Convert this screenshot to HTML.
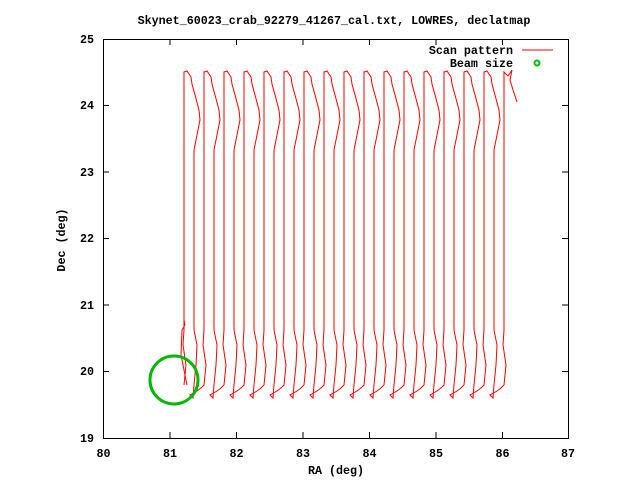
<!DOCTYPE html>
<html><head><meta charset="utf-8"><style>
html,body{margin:0;padding:0;background:#fff;}
svg{display:block}
text{font-family:"Liberation Mono",monospace;font-size:11.7px;font-weight:bold;fill:#000}
</style></head><body>
<svg width="640" height="480" viewBox="0 0 640 480" xmlns="http://www.w3.org/2000/svg">
<defs>
<path id="col" fill="none" stroke="#f00" stroke-width="1" d="M0,385 L2,365 L-1,345 L0,330 L0,72 L3,71 L7,77 L8,84 L11,95 L15,110 L16,120 L13,135 L10,150 L10,330 L13,345 L12,365 L10,385 L9,398 L6,395 L13,391 L17,388 L20,385"/>
</defs>
<text x="334" y="24" text-anchor="middle">Skynet_60023_crab_92279_41267_cal.txt, LOWRES, declatmap</text>
<g stroke="#000" stroke-width="1" fill="none">
<rect x="103.5" y="39.5" width="465" height="399"/>
<path d="M170,39v6M170,438v-6M236.5,39v6M236.5,438v-6M303,39v6M303,438v-6M369.5,39v6M369.5,438v-6M436,39v6M436,438v-6M502.5,39v6M502.5,438v-6
M103,105.5h6M568,105.5h-6M103,172h6M568,172h-6M103,238.5h6M568,238.5h-6M103,305h6M568,305h-6M103,371.5h6M568,371.5h-6"/>
</g>
<g text-anchor="end">
<text x="94" y="43">25</text><text x="94" y="109">24</text><text x="94" y="176">23</text><text x="94" y="242">22</text><text x="94" y="309">21</text><text x="94" y="375">20</text><text x="94" y="442">19</text>
</g>
<g text-anchor="middle">
<text x="103.5" y="457">80</text><text x="170" y="457">81</text><text x="236.5" y="457">82</text><text x="303" y="457">83</text><text x="369.5" y="457">84</text><text x="436" y="457">85</text><text x="502.5" y="457">86</text><text x="568" y="457">87</text>
<text x="336" y="474">RA (deg)</text>
</g>
<text transform="translate(65,240) rotate(-90)" text-anchor="middle">Dec (deg)</text>
<text x="513" y="54" text-anchor="end">Scan pattern</text>
<line x1="522" y1="50" x2="553" y2="50" stroke="#f00"/>
<text x="513" y="67" text-anchor="end">Beam size</text>
<circle cx="537" cy="63" r="2.5" fill="none" stroke="#00c000" stroke-width="2"/>
<path fill="none" stroke="#f00" d="M187,385 L181,355 L182,330 L185,325 L184,320 L184,72"/>
<use href="#col" x="184"/><use href="#col" x="204"/><use href="#col" x="224"/><use href="#col" x="244"/>
<use href="#col" x="264"/><use href="#col" x="284"/><use href="#col" x="304"/><use href="#col" x="324"/>
<use href="#col" x="344"/><use href="#col" x="364"/><use href="#col" x="384"/><use href="#col" x="404"/>
<use href="#col" x="424"/><use href="#col" x="444"/><use href="#col" x="464"/><use href="#col" x="484"/>
<path fill="none" stroke="#f00" d="M504,385 L506,365 L503,345 L504,330 L504,72 L508,76 L512,70 L510,80 L513,90 L517,102"/>
<circle cx="174" cy="380" r="24" fill="none" stroke="#00b800" stroke-width="3"/>
</svg>
</body></html>
